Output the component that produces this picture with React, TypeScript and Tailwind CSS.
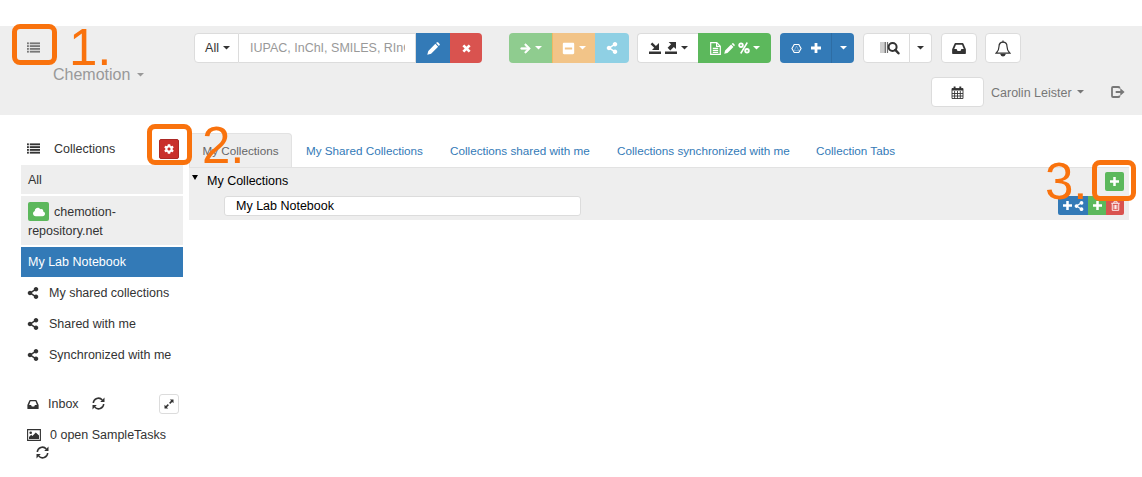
import React from "react";
import { FaArrowRight, FaCloud, FaCog, FaMinusSquare, FaShareAlt } from "react-icons/fa";

type IconProps = { className?: string };

const ListIcon = ({ className = "" }: IconProps) => (
  <svg viewBox="0 0 14 11" className={`shrink-0 ${className}`} fill="currentColor">
    {[0, 3, 6, 9].map((y) => (
      <g key={y}>
        <rect x="0" y={y} width="2" height="2" />
        <rect x="3" y={y} width="11" height="2" />
      </g>
    ))}
  </svg>
);

const Plus = ({ className = "" }: IconProps) => (
  <svg viewBox="0 0 10 10" className={`shrink-0 ${className}`} fill="currentColor">
    <path d="M3.6 0h2.8v3.6H10v2.8H6.4V10H3.6V6.4H0V3.6h3.6z" />
  </svg>
);

const Cross = ({ className = "" }: IconProps) => (
  <svg viewBox="0 0 10 10" className={`shrink-0 ${className}`} fill="none" stroke="currentColor" strokeWidth="3">
    <path d="m1.5 1.5 7 7M8.5 1.5l-7 7" />
  </svg>
);

const Percent = ({ className = "" }: IconProps) => (
  <svg viewBox="0 0 12 12" className={`shrink-0 ${className}`} fill="none" stroke="currentColor">
    <circle cx="3" cy="3.2" r="1.8" strokeWidth="1.9" />
    <circle cx="9" cy="8.8" r="1.8" strokeWidth="1.9" />
    <path d="M9.3.5 2.7 11.5" strokeWidth="1.5" />
  </svg>
);

const InboxIcon = ({ className = "" }: IconProps) => (
  <svg viewBox="0 0 15 12" className={`shrink-0 ${className}`} fill="currentColor" fillRule="evenodd">
    <path d="M3.6 0h7.8q.7 0 1 .7L15 6.8v4.4q0 .8-.8.8H.8Q0 12 0 11.2V6.8L2.6.7q.3-.7 1-.7zM4.2 1.8 2.3 6.6h2.6l1 2h3.2l1-2h2.6l-1.9-4.8z" />
  </svg>
);

const Pencil = ({ className = "" }: IconProps) => (
  <svg viewBox="0 0 14 14" className={`shrink-0 ${className}`} fill="currentColor">
    <path d="M0.3 13.7 1.4 9.6 9 2l3 3-7.6 7.6zM9.8 1.2 10.7.4q.6-.5 1.2 0l1.7 1.7q.5.6 0 1.2l-.8.9z" />
  </svg>
);

const ImportIcon = ({ className = "" }: IconProps) => (
  <svg viewBox="0 0 12 12" className={`shrink-0 ${className}`} fill="currentColor">
    <path d="M0 9.5h12V12H0zM10 1v7H3l2.2-2.2L1.6 2.2 3.3.5l3.6 3.6z" />
  </svg>
);

const ExportIcon = ({ className = "" }: IconProps) => (
  <svg viewBox="0 0 12 12" className={`shrink-0 ${className}`} fill="currentColor">
    <path d="M0 9.5h12V12H0zM3.6 0H11v7L8.8 5 5.3 8.4 2.6 5.8 6.1 2.3z" />
  </svg>
);

const FileIcon = ({ className = "" }: IconProps) => (
  <svg viewBox="0 0 11 13" className={`shrink-0 ${className}`} fill="none" stroke="currentColor" strokeWidth="1.2">
    <path d="M.7.7h6.1l3.5 3.5v8.1H.7zM6.6.7v3.7h3.7M2.8 6.3h5.4M2.8 8.3h5.4M2.8 10.3h5.4" />
  </svg>
);

const RingIcon = ({ className = "" }: IconProps) => (
  <svg viewBox="0 0 12 12" className={`shrink-0 ${className}`} fill="none" stroke="currentColor">
    <path d="M3.5 1.6h5L11 6l-2.5 4.4h-5L1 6z" strokeWidth="1.2" />
    <path d="M6 3.2 3.5 8.4h5z" strokeWidth=".6" opacity=".6" />
  </svg>
);

const BarcodeSearch = ({ className = "" }: IconProps) => (
  <svg viewBox="0 0 20 14" className={`shrink-0 ${className}`} fill="none" stroke="currentColor">
    <path d="M1 1v11M3 1v11" strokeWidth=".8" opacity=".6" />
    <path d="M5.2 1v11" strokeWidth="1.5" opacity=".7" />
    <path d="M7.5 1v11" strokeWidth="1.2" opacity=".7" />
    <circle cx="12.6" cy="6" r="4" strokeWidth="2" />
    <path d="m15.3 8.9 3.2 3.4" strokeWidth="2.4" strokeLinecap="round" />
  </svg>
);

const BellIcon = ({ className = "" }: IconProps) => (
  <svg viewBox="0 0 16 17" className={`shrink-0 ${className}`} fill="none" stroke="currentColor" strokeWidth="1.2">
    <path d="M8 2.2C5.2 2.2 4 4.3 4 6.5c0 4-1.4 5-3 6.7h14c-1.6-1.7-3-2.7-3-6.7 0-2.2-1.2-4.3-4-4.3z" />
    <path d="M8 .4v2M6 14.3q.5 1.5 2 1.5t2-1.5z" fill="currentColor" />
  </svg>
);

const CalendarIcon = ({ className = "" }: IconProps) => (
  <svg viewBox="0 0 13 13" className={`shrink-0 ${className}`} fill="none" stroke="currentColor">
    <path d="M1 2.5h11v10H1zM3.6 5v7.5M6.5 5v7.5M9.3 5v7.5M1 7.5h11M1 10h11" strokeWidth=".9" />
    <path d="M1 3.5h11M3.6.5v3M9.3.5v3" strokeWidth="1.9" />
  </svg>
);

const LogoutIcon = ({ className = "" }: IconProps) => (
  <svg viewBox="0 0 14 12" className={`shrink-0 ${className}`} fill="none" stroke="currentColor">
    <path d="M8.5 2.5V2Q8.5 1 7.5 1H2Q1 1 1 2v8q0 1 1 1h5.5q1 0 1-1v-.5" strokeWidth="1.8" />
    <path d="M4.7 4.9h4.6V2.3L13.6 6 9.3 9.7V7.1H4.7z" fill="currentColor" stroke="none" />
  </svg>
);

const RefreshIcon = ({ className = "" }: IconProps) => (
  <svg viewBox="0 0 13 13" className={`shrink-0 ${className}`} fill="none" stroke="currentColor" strokeWidth="1.5">
    <path d="M1.3 6A5.1 5.1 0 0 1 10.3 3M11.7 7A5.1 5.1 0 0 1 2.7 10" />
    <path d="M12.5.6v4.3H8.2zM.5 12.4V8.1h4.3z" fill="currentColor" stroke="none" />
  </svg>
);

const PictureIcon = ({ className = "" }: IconProps) => (
  <svg viewBox="0 0 14 12" className={`shrink-0 ${className}`} fill="currentColor">
    <path d="M.6.6h12.8v10.8H.6z" fill="none" stroke="currentColor" strokeWidth="1.1" />
    <circle cx="3.7" cy="3.8" r="1.3" />
    <path d="M2 10V8L4.2 5.8l1.2 1.2L8.8 3.4 12 6.6V10z" />
  </svg>
);

const ExpandIcon = ({ className = "" }: IconProps) => (
  <svg viewBox="0 0 10 10" className={`shrink-0 ${className}`} fill="currentColor">
    <path d="M5.8.5h3.7v3.7L8.2 2.9 6.2 4.9l-1.1-1.1 2-2zM4.2 9.5H.5V5.8l1.3 1.3 2-2 1.1 1.1-2 2z" />
  </svg>
);

const TrashIcon = ({ className = "" }: IconProps) => (
  <svg viewBox="0 0 10 11" className={`shrink-0 ${className}`} fill="none" stroke="currentColor" strokeWidth="1">
    <path d="M.3 2.5h9.4M3.2 2.3V.8h3.6v1.5M1.4 2.8v7.5h7.2V2.8M3.5 4.3v4.5M5 4.3v4.5M6.5 4.3v4.5" />
  </svg>
);

const Caret = ({ className = "" }: IconProps) => (
  <svg viewBox="0 0 8 4" className={`h-[3.5px] w-[7px] shrink-0 ${className}`} fill="currentColor">
    <path d="M0 0h8L4 4z" />
  </svg>
);

const btn = "flex h-[30px] shrink-0 items-center justify-center";
const white = "border border-[#dcdcdc] bg-white text-[#333]";

function Toolbar() {
  return (
    <div className="flex">
      <div className="flex w-[288px]">
        <button className={`${btn} ${white} w-[45px] gap-[4px] rounded-l-[4px] pl-[2px]`}>
          All <Caret />
        </button>
        <div className={`${btn} ${white} w-[177px] border-l-0 pr-[10px] pl-[11px]`}>
          <span className="w-full overflow-hidden text-left whitespace-nowrap text-[#999]">IUPAC, InChI, SMILES, RInChI</span>
        </div>
        <button className={`${btn} w-[34px] bg-[#337ab7] text-white`}>
          <Pencil className="size-[13px]" />
        </button>
        <button className={`${btn} w-[32px] rounded-r-[4px] bg-[#d9534f] text-white`}>
          <Cross className="size-[9px]" />
        </button>
      </div>
      <div className="ml-[27px] flex text-white">
        <button className={`${btn} w-[43px] gap-[4px] rounded-l-[4px] bg-[#8fcc8f]`}>
          <FaArrowRight className="size-[11px]" stroke="currentColor" strokeWidth="30" />
          <Caret />
        </button>
        <button className={`${btn} w-[43px] gap-[4px] border-l border-[#efb963] bg-[#f2c488]`}>
          <FaMinusSquare className="size-[13px]" />
          <Caret />
        </button>
        <button className={`${btn} w-[34px] rounded-r-[4px] bg-[#8fd0e4]`}>
          <FaShareAlt className="size-[12px]" />
        </button>
      </div>
      <div className="ml-[8px] flex">
        <button className={`${btn} ${white} w-[61px] gap-[4px] rounded-l-[4px] border-r-0`}>
          <ImportIcon className="size-[12px]" />
          <ExportIcon className="size-[12px]" />
          <Caret />
        </button>
        <button className={`${btn} w-[73px] gap-[3px] rounded-r-[4px] bg-[#5cb85c] text-white`}>
          <FileIcon className="h-[13px] w-[11px]" />
          <Pencil className="size-[11px]" />
          <Percent className="size-[12px]" />
          <Caret />
        </button>
      </div>
      <div className="ml-[9px] flex text-white">
        <button className={`${btn} w-[51px] gap-[9px] rounded-l-[4px] bg-[#337ab7] pl-[1px]`}>
          <RingIcon className="size-[11px]" />
          <Plus className="size-[10px]" />
        </button>
        <button className={`${btn} w-[23px] rounded-r-[4px] border-l border-[#2e6da4] bg-[#337ab7]`}>
          <Caret />
        </button>
      </div>
      <div className="ml-[9px] flex">
        <button className={`${btn} ${white} w-[47px] rounded-l-[4px] pl-[6px]`}>
          <BarcodeSearch className="h-[14px] w-[20px]" />
        </button>
        <button className={`${btn} ${white} w-[22px] rounded-r-[4px] border-l-0`}>
          <Caret />
        </button>
      </div>
      <button className={`${btn} ${white} ml-[9px] w-[36px] rounded-[4px]`}>
        <InboxIcon className="h-[11px] w-[14px]" />
      </button>
      <button className={`${btn} ${white} ml-[8px] w-[36px] rounded-[4px]`}>
        <BellIcon className="h-[17px] w-[16px]" />
      </button>
    </div>
  );
}

function Header() {
  return (
    <header className="flex h-[89px] bg-[#eeeeee]">
      <div className="w-[194px] shrink-0 pt-[16px] pl-[27px] text-[#777]">
        <ListIcon className="h-[11px] w-[13px]" />
        <div className="mt-[10px] ml-[26px] flex items-center gap-[7px] text-[16px] leading-[24px] text-[#999]">
          Chemotion <Caret />
        </div>
      </div>
      <div className="flex-1 pt-[7px]">
        <Toolbar />
        <div className="mt-[14px] flex items-center pl-[737px] whitespace-nowrap text-[#777]">
          <button className={`${btn} ${white} w-[53px] rounded-[4px]`}>
            <CalendarIcon className="size-[13px]" />
          </button>
          <span className="ml-[7px] pt-[1px]">Carolin Leister</span>
          <Caret className="ml-[5px]" />
          <LogoutIcon className="ml-[27px] h-[12px] w-[14px]" />
        </div>
      </div>
    </header>
  );
}

function Sidebar() {
  return (
    <aside className="w-[162px] shrink-0 text-[#333]">
      <div className="flex h-[33px] items-center pr-[4px] pl-[6px]">
        <ListIcon className="h-[11px] w-[13px]" />
        <span className="ml-[14px]">Collections</span>
        <button className="ml-auto flex size-[20px] items-center justify-center rounded-[2px] border border-[#ac2925] bg-[#c9302c] text-white">
          <FaCog className="size-[10px]" />
        </button>
      </div>
      <div className="flex h-[29px] items-center bg-[#eeeeee] pl-[7px]">All</div>
      <div className="mt-[2px] h-[49px] bg-[#eeeeee] pt-[6px] pl-[7px]">
        <div className="flex items-center">
          <span className="flex h-[19px] w-[21px] items-center justify-center rounded-[2px] bg-[#5cb85c] text-white">
            <FaCloud className="size-[12px]" />
          </span>
          <span className="ml-[5px]">chemotion-</span>
        </div>
        <div className="leading-[20px]">repository.net</div>
      </div>
      <div className="mt-[2px] flex h-[30px] items-center bg-[#337ab7] pl-[7px] text-white">My Lab Notebook</div>
      {["My shared collections", "Shared with me", "Synchronized with me"].map((label) => (
        <div key={label} className="mt-[1px] flex h-[30px] items-center pl-[6px] whitespace-nowrap">
          <FaShareAlt className="size-[12px]" />
          <span className="ml-[10px]">{label}</span>
        </div>
      ))}
      <div className="mt-[19px] flex h-[30px] items-center pr-[4px] pl-[6px]">
        <InboxIcon className="h-[9px] w-[12px]" />
        <span className="ml-[9px]">Inbox</span>
        <RefreshIcon className="mb-[2px] ml-[13px] size-[13px]" />
        <button className="ml-auto flex size-[20px] items-center justify-center rounded-[3px] border border-[#dcdcdc]">
          <ExpandIcon className="size-[10px]" />
        </button>
      </div>
      <div className="mt-[7px] flex h-[18px] items-center pl-[6px] whitespace-nowrap">
        <PictureIcon className="h-[12px] w-[14px]" />
        <span className="ml-[9px]">0 open SampleTasks</span>
      </div>
      <RefreshIcon className="mt-[2px] ml-[15px] size-[13px]" />
    </aside>
  );
}

function Main() {
  return (
    <main className="ml-[6px] w-[940px] pt-[1px]">
      <nav className="flex h-[34px] text-[11.7px] whitespace-nowrap text-[#337ab7]">
        <span className="flex w-[103px] items-center justify-center rounded-t-[4px] border border-b-0 border-[#e2e2e2] bg-[#eeeeee] pt-[1px] text-[#666]">
          My Collections
        </span>
        <span className="ml-[14px] flex w-[144px] items-center pt-[1px]">My Shared Collections</span>
        <span className="flex w-[167px] items-center pt-[1px]">Collections shared with me</span>
        <span className="flex w-[199px] items-center pt-[1px]">Collections synchronized with me</span>
        <span className="flex items-center pt-[1px]">Collection Tabs</span>
      </nav>
      <section className="h-[53px] border-t border-[#e2e2e2] bg-[#eeeeee] text-black">
        <div className="flex h-[27px] items-center pr-[5px]">
          <svg viewBox="0 0 6 5" className="mb-[9px] ml-[3px] h-[5px] w-[6px]" fill="currentColor">
            <path d="M0 0h6L3 5z" />
          </svg>
          <span className="mb-[2px] ml-[9px]">My Collections</span>
          <button className="ml-auto flex h-[19px] w-[19px] items-center justify-center rounded-[2px] bg-[#5cb85c] text-white">
            <Plus className="size-[9px]" />
          </button>
        </div>
        <div className="flex h-[21px] items-center pr-[5px] pl-[35px]">
          <div className="flex h-[20px] w-[357px] items-center rounded-[3px] border border-[#dcdcdc] bg-white pl-[11px]">
            My Lab Notebook
          </div>
          <div className="ml-auto flex h-[19px] text-white">
            <button className="flex w-[30px] items-center justify-center gap-[2px] rounded-l-[2px] bg-[#337ab7]">
              <Plus className="size-[9px]" />
              <FaShareAlt className="size-[10px]" />
            </button>
            <button className="flex w-[18px] items-center justify-center bg-[#5cb85c]">
              <Plus className="size-[9px]" />
            </button>
            <button className="flex w-[18px] items-center justify-center rounded-r-[2px] bg-[#d9534f]">
              <TrashIcon className="h-[10px] w-[9px]" />
            </button>
          </div>
        </div>
      </section>
    </main>
  );
}

const mark = "pointer-events-none absolute rounded-[8px] border-[5px] border-[#f9720d]";
const markNumber = "pointer-events-none absolute text-[51px] leading-none text-[#f9720d]";

export default function App() {
  return (
    <div className="relative h-[477px] w-[1142px] overflow-hidden bg-white pt-[26px] font-['Liberation_Sans',Arial,sans-serif] text-[12.5px] leading-[18px]">
      <Header />
      <div className="flex pt-[17px] pl-[21px]">
        <Sidebar />
        <Main />
      </div>
      <div className={`${mark} top-[24px] left-[12px] h-[41px] w-[45px]`} />
      <div className={`${markNumber} top-[22px] left-[69px]`}>1.</div>
      <div className={`${mark} top-[124px] left-[147px] h-[41px] w-[45px]`} />
      <div className={`${markNumber} top-[120px] left-[202px]`}>2.</div>
      <div className={`${mark} top-[160px] left-[1092px] h-[41px] w-[44px]`} />
      <div className={`${markNumber} top-[156px] left-[1045px]`}>3.</div>
    </div>
  );
}
